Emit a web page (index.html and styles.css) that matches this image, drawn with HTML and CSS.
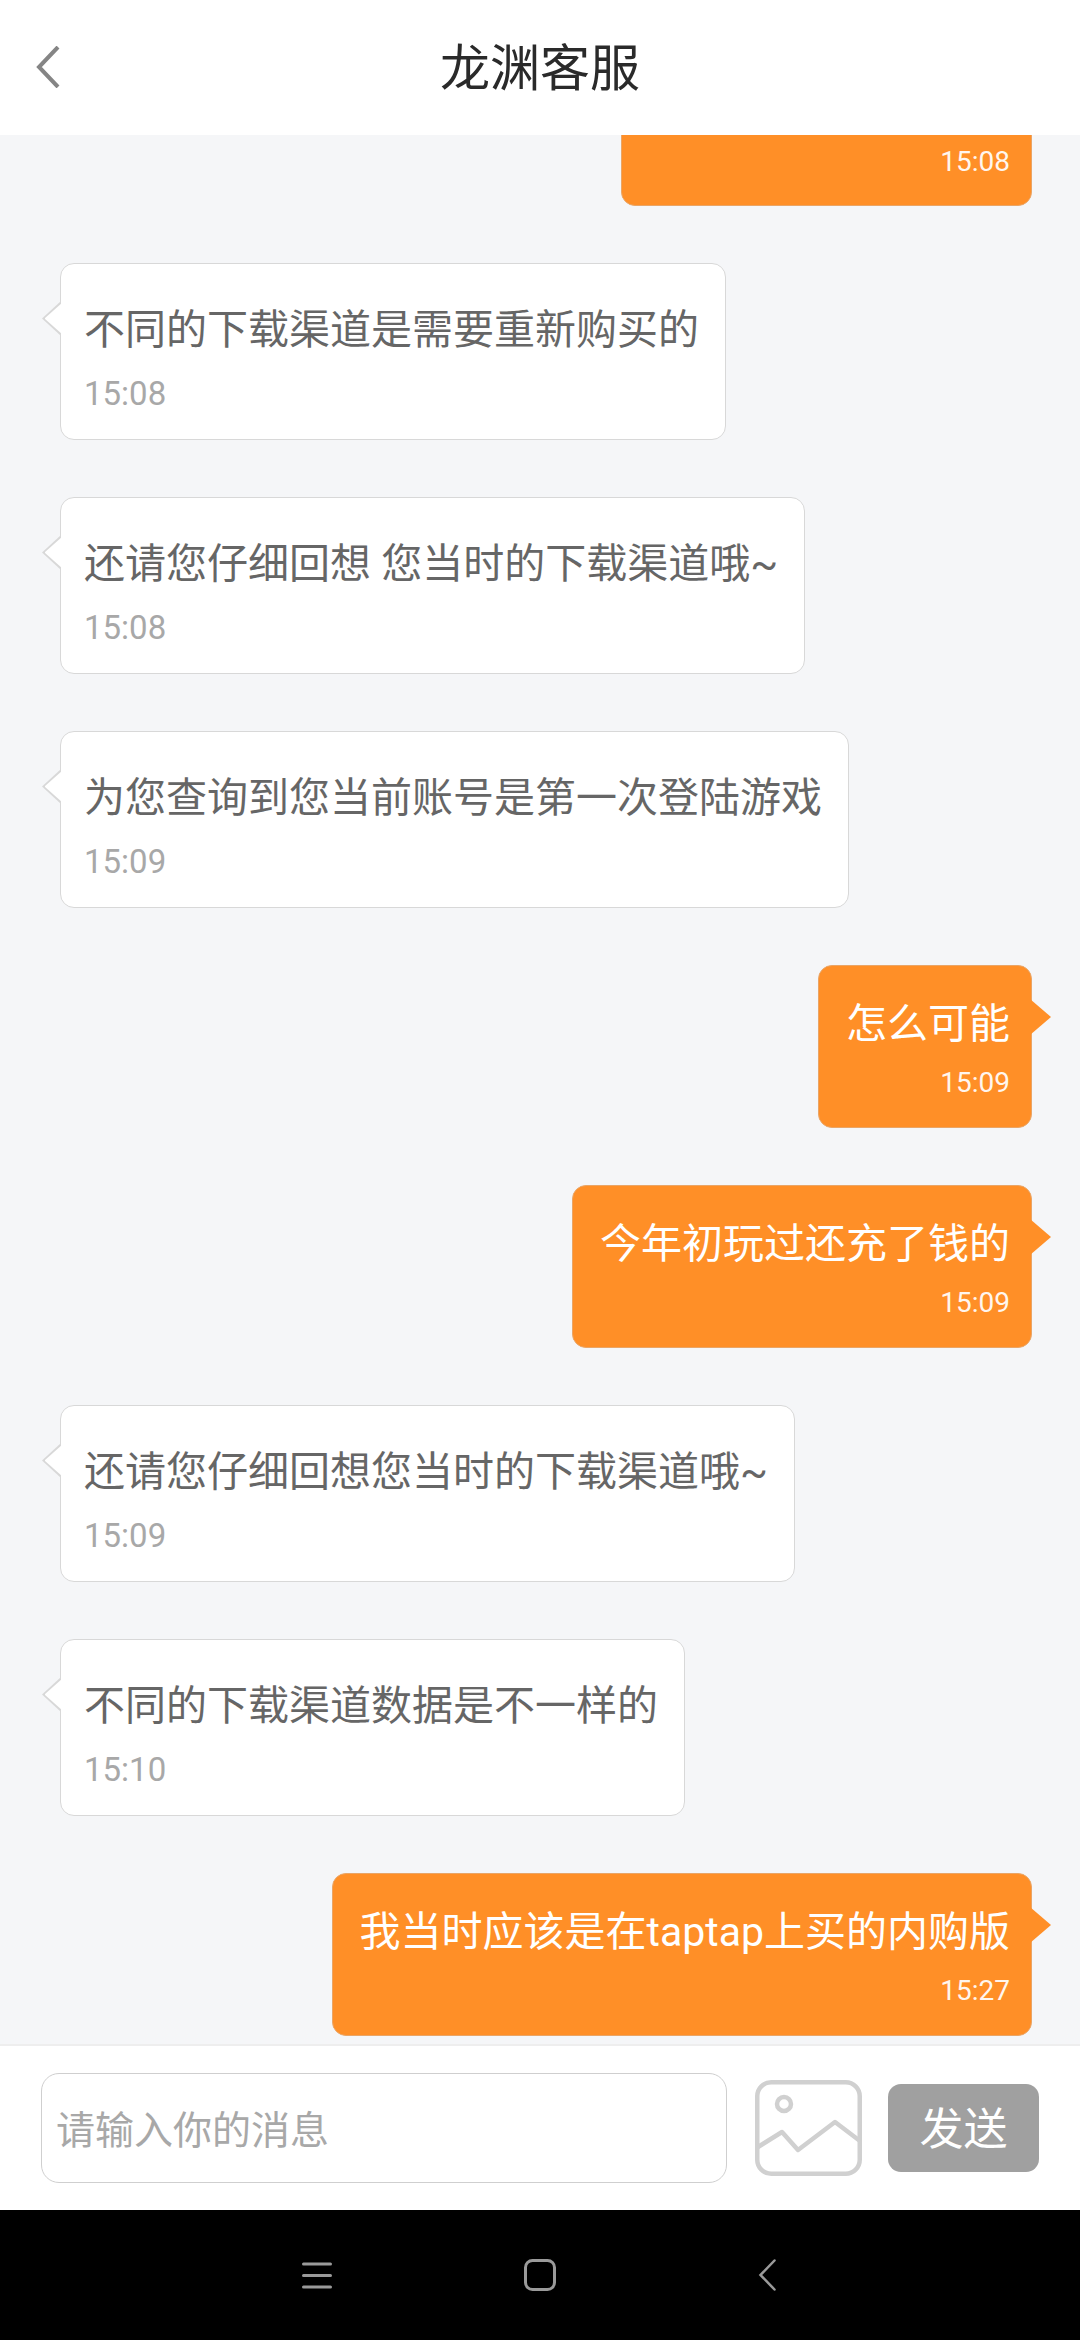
FILE: index.html
```html
<!DOCTYPE html>
<html lang="zh">
<head>
<meta charset="utf-8">
<title>龙渊客服</title>
<link rel="stylesheet" href="styles.css">
</head>
<body>
<div class="app">
  <header class="topbar">
    <svg class="back" width="24" height="42" viewBox="0 0 24 42"><path d="M22 1 L3 21 L22 41" fill="none" stroke="#858585" stroke-width="4"/></svg>
    <h1 class="title">龙渊客服</h1>
  </header>
  <main class="log">
    <div class="msg me"><div class="bubble stub"><div class="time">15:08</div></div></div>
    <div class="msg you"><div class="bubble"><p class="text">不同的下载渠道是需要重新购买的</p><div class="time">15:08</div></div></div>
    <div class="msg you"><div class="bubble"><p class="text">还请您仔细回想 您当时的下载渠道哦~</p><div class="time">15:08</div></div></div>
    <div class="msg you"><div class="bubble"><p class="text">为您查询到您当前账号是第一次登陆游戏</p><div class="time">15:09</div></div></div>
    <div class="msg me"><div class="bubble"><p class="text">怎么可能</p><div class="time">15:09</div></div></div>
    <div class="msg me"><div class="bubble"><p class="text">今年初玩过还充了钱的</p><div class="time">15:09</div></div></div>
    <div class="msg you"><div class="bubble"><p class="text">还请您仔细回想您当时的下载渠道哦~</p><div class="time">15:09</div></div></div>
    <div class="msg you"><div class="bubble"><p class="text">不同的下载渠道数据是不一样的</p><div class="time">15:10</div></div></div>
    <div class="msg me"><div class="bubble"><p class="text">我当时应该是在taptap上买的内购版</p><div class="time">15:27</div></div></div>
  </main>
  <footer class="composer">
    <div class="field">请输入你的消息</div>
    <svg class="pic" width="107" height="96" viewBox="0 0 107 96" fill="none" stroke="#d0d0d0" stroke-width="4.5">
      <rect x="2.25" y="2.25" width="102.5" height="91.5" rx="14"/>
      <circle cx="29" cy="24" r="7"/>
      <path d="M3 67 L27 52 L43 70 L80 42 L105 61" stroke-linejoin="round"/>
    </svg>
    <button class="send">发送</button>
  </footer>
  <nav class="sysnav">
    <svg class="nav-menu" width="30" height="27" viewBox="0 0 30 27"><path d="M1.5 2H28.5M1.5 13.5H28.5M1.5 25H28.5" stroke="#9a9a9a" stroke-width="3" stroke-linecap="round"/></svg>
    <svg class="nav-home" width="32" height="32" viewBox="0 0 32 32"><rect x="1.5" y="1.5" width="29" height="29" rx="7" fill="none" stroke="#9a9a9a" stroke-width="3"/></svg>
    <svg class="nav-back" width="18" height="32" viewBox="0 0 18 32"><path d="M16.5 1.5 L2.5 16 L16.5 30.5" fill="none" stroke="#9a9a9a" stroke-width="2.5" stroke-linecap="round"/></svg>
  </nav>
</div>
</body>
</html>
```
FILE: styles.css
```css
* { box-sizing: border-box; }
html, body { margin: 0; padding: 0; }
body { font-family: Roboto, "Noto Sans CJK SC", sans-serif; background: #f5f6f8; }
.app { width: 1080px; height: 2340px; display: flex; flex-direction: column; overflow: hidden; }
.topbar { height: 135px; flex: none; background: #fff; position: relative; display: flex; align-items: center; justify-content: center; z-index: 1; }
.back { position: absolute; left: 36px; top: 46px; }
.title { margin: 2px 0 0; font-size: 50px; font-weight: 400; color: #2a2a2a; line-height: 1; }
.log { flex: 1; min-height: 0; display: flex; flex-direction: column; justify-content: flex-end; overflow: hidden; padding: 0 48px 8px 60px; }
.msg { display: flex; margin-top: 57px; flex: none; }
.msg.me { justify-content: flex-end; }
.bubble { position: relative; border-radius: 14px; }
.text { margin: 0; line-height: 56px; white-space: nowrap; font-size: 41px; }
.you .bubble { background: #fff; border: 1.5px solid #d8d8d8; padding: 38px 26px 0 23px; height: 177px; }
.you .text { color: #666666; }
.you .time { color: #a8a8a8; font-size: 33px; line-height: 40px; margin-top: 16px; }
.you .bubble::before { content: ""; position: absolute; left: -19px; top: 37px; width: 19px; height: 35px; background: #d8d8d8; clip-path: polygon(100% 0, 0 50%, 100% 100%); }
.you .bubble::after { content: ""; position: absolute; left: -16.5px; top: 38.5px; width: 18px; height: 32px; background: #fff; clip-path: polygon(100% 0, 0 50%, 100% 100%); }
.me .bubble { background: #ff8f27; border: 1.5px solid #eaa566; padding: 30px 21px 0 27px; height: 163px; }
.me .text { color: #fff; }
.me .time { color: #fff; opacity: .92; font-size: 28px; line-height: 36px; margin-top: 13px; text-align: right; }
.me .bubble::after { content: ""; position: absolute; right: -20px; top: 33px; width: 21px; height: 36px; background: #ff8f27; clip-path: polygon(0 0, 100% 50%, 0 100%); }
.me .stub { width: 411px; padding-top: 100px; }
.me .stub .time { margin-top: 0; }
.me .stub::after { display: none; }
.composer { height: 166px; flex: none; background: #fff; border-top: 2px solid #eeeeee; display: flex; align-items: center; padding: 0 0 0 41px; }
.field { width: 686px; height: 110px; border: 1.5px solid #cfcfcf; border-radius: 18px; color: #a8a8a8; font-size: 39px; display: flex; align-items: center; padding: 0 0 3px 14px; }
.pic { margin-left: 28px; flex: none; }
.send { margin-left: 26px; width: 151px; height: 88px; border: 0; border-radius: 13px; background: #a0a0a0; color: #fff; font-family: inherit; font-size: 44px; padding: 0 0 4px; }
.sysnav { height: 130px; flex: none; background: #000; display: flex; align-items: center; padding-left: 302px; }
.nav-home { margin-left: 192px; }
.nav-back { margin-left: 202px; }
```
